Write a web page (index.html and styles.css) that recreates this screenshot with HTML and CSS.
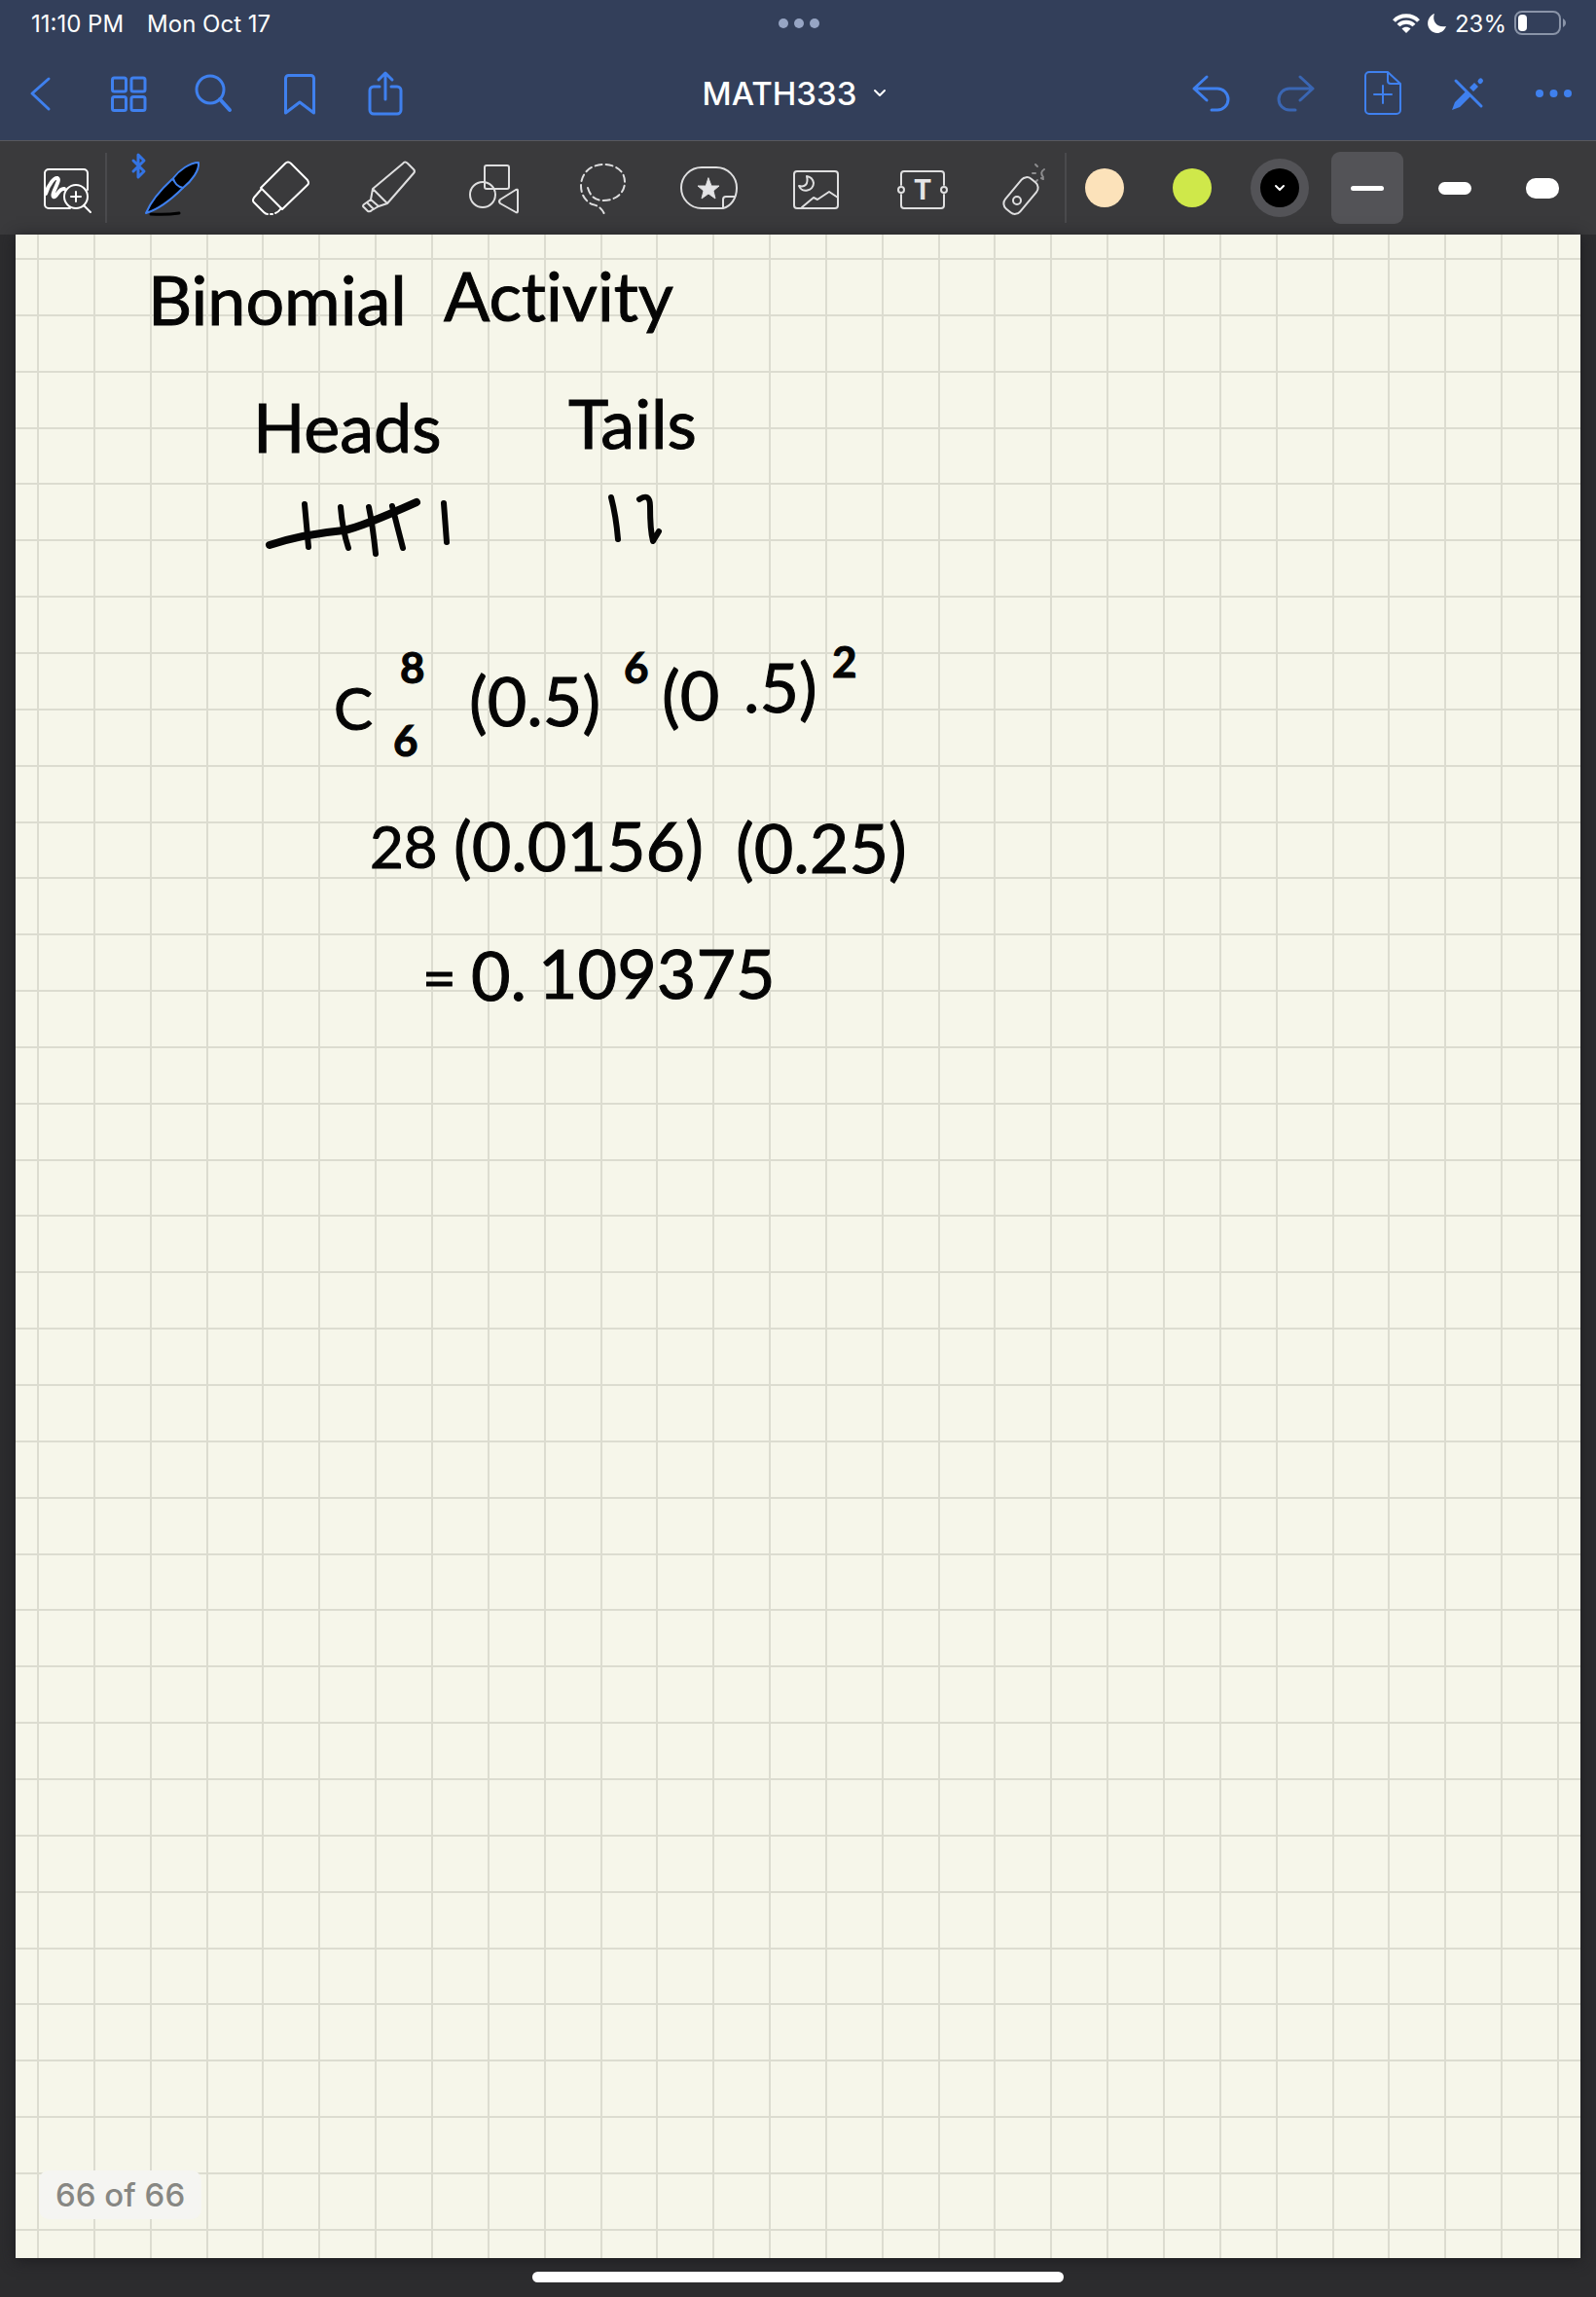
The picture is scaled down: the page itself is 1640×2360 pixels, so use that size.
FILE: index.html
```html
<!DOCTYPE html>
<html lang="en">
<head>
<meta charset="utf-8">
<meta name="viewport" content="width=device-width, initial-scale=1">
<title>MATH333</title>
<link rel="stylesheet" href="styles.css">
</head>
<body>
<header class="header">
  <div class="status">
    <div class="status-left"><span>11:10 PM</span><span>Mon Oct 17</span></div>
    <div class="multitask"><i></i><i></i><i></i></div>
    <div class="status-right">
      <svg width="28" height="20" viewBox="0 0 28 20" fill="none" stroke="#fff" stroke-width="4"><path d="M1.500 7.500C8 .500 20 .500 26.500 7.500"/><path d="M6 12C10 7.500 18 7.500 22 12"/><path d="M14 20l-4.500-4.500c2.500-2.500 6.500-2.500 9 0z" fill="#fff" stroke="none"/></svg>
      <svg width="20" height="20" viewBox="0 0 20 20"><path d="M7 0C4 8 10 15 19 13C17 18 13 20 10 20C-2 19-3 4 7 0z" fill="#fff"/></svg>
      <span>23%</span>
      <svg width="54" height="26" viewBox="0 0 54 26"><rect x="1" y="1" width="46" height="23" rx="7" fill="none" stroke="#8a94a8" stroke-width="2"/><rect x="4" y="4" width="9" height="17" rx="4" fill="#fff"/><path d="M50 8c4 2 4 7 0 9z" fill="#8a94a8"/></svg>
    </div>
  </div>
  <nav class="nav">
    <div class="nav-group">
      <button class="nav-btn" aria-label="Back"><svg class="nav-icon" viewBox="0 0 48 48"><path d="M30 9L13 24L30 40"/></svg></button>
      <button class="nav-btn" aria-label="Thumbnails"><svg class="nav-icon" viewBox="0 0 48 48"><rect x="7.500" y="8" width="14" height="14" rx="2"/><rect x="27" y="8" width="14" height="14" rx="2"/><rect x="7.500" y="27.500" width="14" height="14" rx="2"/><rect x="27" y="27.500" width="14" height="14" rx="2"/></svg></button>
      <button class="nav-btn" aria-label="Search"><svg class="nav-icon" viewBox="0 0 48 48"><circle cx="20" cy="20" r="14"/><path d="M30 30L40 41" stroke-width="4"/></svg></button>
      <button class="nav-btn" aria-label="Bookmark"><svg class="nav-icon" viewBox="0 0 48 48"><path d="M9.500 44V8.500a3 3 0 0 1 3-3h23a3 3 0 0 1 3 3V44L24 33z"/></svg></button>
      <button class="nav-btn" aria-label="Share"><svg class="nav-icon" viewBox="0 0 48 48"><path d="M18 17h-6a4 4 0 0 0-4 4v20a4 4 0 0 0 4 4h24a4 4 0 0 0 4-4V21a4 4 0 0 0-4-4h-6M24 30V4M17 10l7-7l7 7"/></svg></button>
    </div>
    <button class="title">MATH333<svg width="16" height="12" viewBox="0 0 16 12" fill="none" stroke="#fff" stroke-width="2" stroke-linecap="round" stroke-linejoin="round"><path d="M3 3l5 5l5-5"/></svg></button>
    <div class="nav-group nav-end">
      <button class="nav-btn" aria-label="Undo"><svg class="nav-icon" viewBox="0 0 48 48"><path d="M20 7L7 19L20 31M7 19H31a11 11 0 0 1 0 22H25"/></svg></button>
      <button class="nav-btn" aria-label="Redo" disabled><svg class="nav-icon" viewBox="0 0 48 48"><path d="M28 7L41 19L28 31M41 19H17a11 11 0 0 0 0 22H23"/></svg></button>
      <button class="nav-btn" aria-label="Add page"><svg class="nav-icon thin" viewBox="0 0 48 48"><path d="M30 2H11a4 4 0 0 0-4 4v35a4 4 0 0 0 4 4h28a4 4 0 0 0 4-4V14zV11a3 3 0 0 0 3 3h10M25 16v18M16 25h18"/></svg></button>
      <button class="nav-btn" aria-label="Read only mode"><svg class="nav-icon" viewBox="0 0 48 48"><path d="M12 11L38 37"/><path d="M8 41l3-8L22 22l5 5L16 38zM26 18l5-5l4 4l-5 5z" fill="#3f80ee" stroke="none"/><path d="M37 11.500l.500-.500" stroke-width="5"/></svg></button>
      <button class="nav-btn" aria-label="More"><svg class="nav-icon" viewBox="0 0 48 48"><g fill="#3f80ee" stroke="none"><circle cx="10" cy="24" r="4"/><circle cx="24.500" cy="24" r="4"/><circle cx="39" cy="24" r="4"/></g></svg></button>
    </div>
  </nav>
</header>

<div class="toolbar">
  <button class="tool zoom-tool" aria-label="Zoom window"><svg class="tool-icon bright" viewBox="0 0 64 64"><path d="M53 34V17a4 4 0 0 0-4-4H13a4 4 0 0 0-4 4v32a4 4 0 0 0 4 4h22"/><path d="M10 38C13 28 19 21 22 22C26 24 15 38 18 41C21 43 23 32 29 33" stroke-width="4"/><circle cx="41" cy="41" r="12"/><path d="M41 36v10M36 41h10M49 50l7 7"/></svg></button>
  <span class="divider"></span>
  <div class="tools">
    <button class="tool" aria-label="Pen"><svg class="tool-icon" viewBox="0 0 64 64"><path d="M10 59Q26 60 39 58" stroke="#000" stroke-width="3"/><g stroke="#3f80ee" stroke-width="2" fill="#000"><path d="M5 58C10 46 20 34 32 23L43 32C33 42 18 54 5 58Z"/><path d="M33 22C39 14 50 6 59 6C60 14 52 25 43 32C38 31 34 27 33 22z"/></g><path d="M-8 4L3 15L-3 21V-2L3 4L-8 15" stroke="#3474e4" stroke-width="3"/></svg></button>
    <button class="tool" aria-label="Eraser"><svg class="tool-icon bright" viewBox="0 0 64 64"><path d="M38 7q3-3 6 0L61 24q2 3 0 5L35 54L13 32z"/><path d="M13 34L6 42q-2 3 0 5L16 57q2 2 4 2M23 59h2M28 58q3-1 6-5"/></svg></button>
    <button class="tool" aria-label="Highlighter"><svg class="tool-icon" viewBox="0 0 64 64"><path d="M49 7q2-3 5 0l6 6q2 2 0 4L33 48L18 33zM18 33l-2 11l8 7l9-3M16 44l-7 5q-2 2 0 3l4 4q2 1 4-1l7-4M12 47l7 7"/></svg></button>
    <button class="tool" aria-label="Shapes"><svg class="tool-icon" viewBox="0 0 64 64"><rect x="23" y="9" width="25" height="24" rx="2"/><circle cx="21" cy="39" r="13"/><path d="M39 44q-2 2 0 4l16 9q2 1 2-1V35q0-2-2-1z"/></svg></button>
    <button class="tool" aria-label="Lasso"><svg class="tool-icon" viewBox="0 0 64 64"><path d="M19 32C22 42 28 45 35 45C48 45 57 37 57 26C57 14 47 8 35 8C22 8 12 17 12 30C12 38 16 46 24 49Q33 51 36 59" stroke-dasharray="7 4"/></svg></button>
    <button class="tool" aria-label="Elements"><svg class="tool-icon" viewBox="0 0 64 64"><path d="M48 53H26a21 21 0 0 1 0-42h15a21 21 0 0 1 21 21C62 43 56 51 48 53V44q0-3 3-3h9"/><path d="M33 22l3 8h8l-6 5l2 8l-7-5l-7 5l2-8l-6-5h8z" fill="#e4e4e6" stroke-width="1"/></svg></button>
    <button class="tool" aria-label="Image"><svg class="tool-icon" viewBox="0 0 64 64"><rect x="11" y="15" width="45" height="38" rx="3"/><path d="M24 20C26 28 22 32 16 30C19 38 31 35 31 27Q30 21 24 20zM19 52L31 42l4 2l12-8l9 6"/></svg></button>
    <button class="tool" aria-label="Text"><svg class="tool-icon" viewBox="0 0 64 64"><path d="M11 29V18a3 3 0 0 1 3-3h38a3 3 0 0 1 3 3v11M11 39v11a3 3 0 0 0 3 3h38a3 3 0 0 0 3-3V39"/><circle cx="11" cy="34" r="3"/><circle cx="55" cy="34" r="3"/><text class="icon-letter" x="33" y="44" text-anchor="middle">T</text></svg></button>
    <button class="tool" aria-label="Laser pointer"><svg class="tool-icon" viewBox="0 0 64 64"><rect x="14" y="20" width="20" height="40" rx="7" transform="rotate(40 24 40)"/><circle cx="20" cy="45" r="4"/><path d="M39 26l2-2M36 17h3M39 8l2 2M45 22l2 1M48 13q-5 3-1 8" opacity=".5"/></svg></button>
  </div>
  <span class="divider"></span>
  <div class="swatches">
    <button class="swatch" aria-label="Peach"><span class="dot peach"></span></button>
    <button class="swatch" aria-label="Lime"><span class="dot lime"></span></button>
    <button class="swatch" aria-label="Black, selected"><span class="dot black"><svg width="12" height="10" viewBox="0 0 12 10" fill="none" stroke="#fff" stroke-width="2" stroke-linecap="round" stroke-linejoin="round"><path d="M2 3l4 4l4-4"/></svg></span></button>
    <button class="swatch selected" aria-label="Thin stroke"><span class="width thin-w"></span></button>
    <button class="swatch" aria-label="Medium stroke"><span class="width mid-w"></span></button>
    <button class="swatch" aria-label="Thick stroke"><span class="width thick-w"></span></button>
  </div>
</div>

<main class="desk">
  <section class="page">
    <svg class="layer" width="100%" height="100%">
      <defs>
        <!-- one tile holds twenty squares of graph paper -->
        <pattern id="grid" x="22" y="24" width="1157" height="1157" patternUnits="userSpaceOnUse">
          <path id="rows" fill="none" stroke="#dcdcd0" stroke-width="2" d="M0 1h1157M0 59h1157M0 117h1157M0 175h1157M0 232h1157M0 290h1157M0 348h1157M0 406h1157M0 464h1157M0 522h1157M0 580h1157M0 637h1157M0 695h1157M0 753h1157M0 811h1157M0 869h1157M0 927h1157M0 984h1157M0 1042h1157M0 1100h1157"/>
          <use href="#rows" transform="matrix(0 1 1 0 0 0)"/>
        </pattern>
      </defs>
      <rect width="100%" height="100%" fill="url(#grid)"/>
    </svg>
    <svg class="layer ink" width="100%" height="100%">
      <g transform="translate(-16 -241)">
        <text class="large" x="152" y="334">Binomial</text>
        <text class="large" x="456" y="330">Activity</text>
        <text class="large" x="260" y="465">Heads</text>
        <text class="large" x="584" y="461">Tails</text>
        <g class="tally">
          <path d="M313 518L317 562M350 521Q352 545 358 563M379 521Q383 540 386 569M403 520Q408 540 414 563"/>
          <path class="strike" d="M277 560Q310 549 353 545Q370 542 428 516"/>
          <path d="M456 517L459 557M628 511Q633 530 635 554M657 513Q668 506 668 520Q668 545 671 556L677 546"/>
        </g>
        <text class="medium" x="343" y="750">C</text>
        <text class="small" x="411" y="702">8</text>
        <text class="small" x="404" y="777">6</text>
        <text class="large" x="482" y="746">(0.5)</text>
        <text class="small" x="641" y="702">6</text>
        <text class="large" x="680" y="740">(0</text>
        <text class="large" x="764" y="732">.5)</text>
        <text class="small" x="855" y="696">2</text>
        <text class="medium" x="380" y="892">28</text>
        <text class="large" x="466" y="895">(0.0156)</text>
        <text class="large" x="756" y="897">(0.25)</text>
        <text class="medium" x="434" y="1026">=</text>
        <text class="large" x="484" y="1028">0.</text>
        <text class="large" x="553" y="1026">109375</text>
      </g>
    </svg>
    <div class="counter">66 of 66</div>
  </section>
</main>
<footer class="home"><span></span></footer>
</body>
</html>
```
FILE: styles.css
```css
* { box-sizing: border-box; }
body {
  margin: 0;
  min-height: 100vh;
  display: flex;
  flex-direction: column;
  background: #2c2c2e;
  color: #fff;
  font-family: Inter, "Liberation Sans", sans-serif;
}
button {
  margin: 0;
  padding: 0;
  border: 0;
  background: none;
  color: inherit;
  font: inherit;
  display: flex;
  align-items: center;
  justify-content: center;
}
svg { display: block; overflow: visible; }

.header { background: #333f5a; border-bottom: 1px solid #58595e; }
.status {
  display: grid;
  grid-template-columns: 1fr auto 1fr;
  align-items: center;
  height: 48px;
  padding: 0 30px 0 32px;
  font-size: 24px;
}
.status-left { display: flex; gap: 24px; }
.multitask { display: flex; gap: 6px; }
.multitask i { width: 10px; height: 10px; border-radius: 50%; background: #97a5c4; }
.status-right { display: flex; align-items: center; justify-content: flex-end; gap: 8px; }

.nav {
  display: grid;
  grid-template-columns: 1fr auto 1fr;
  align-items: center;
  height: 96px;
}
.nav-group { display: flex; }
.nav-end { justify-content: flex-end; }
.nav-btn { width: 88px; height: 96px; }
.nav-btn:disabled { opacity: .6; }
.nav-icon {
  width: 48px;
  height: 48px;
  fill: none;
  stroke: #3f80ee;
  stroke-width: 3;
  stroke-linecap: round;
  stroke-linejoin: round;
}
.thin { stroke-width: 2; }
.title { gap: 16px; padding-right: 6px; font-size: 33px; font-weight: 500; }

.toolbar { display: flex; align-items: center; height: 96px; background: #3a3a3c; }
.tool { width: 74px; height: 74px; }
.zoom-tool { margin: 0 2px 0 32px; }
.divider { width: 2px; height: 72px; background: #4a4a4d; }
.tools { flex: 1; display: flex; justify-content: space-between; padding-left: 30px; }
.tool-icon {
  width: 64px;
  height: 64px;
  fill: none;
  stroke: #dededf;
  stroke-width: 2;
  stroke-linecap: round;
  stroke-linejoin: round;
}
.bright { stroke: #fff; }
.icon-letter { fill: #e4e4e6; stroke: none; font-size: 28px; font-weight: 700; }
.swatches { display: flex; gap: 16px; padding: 0 18px 0 2px; }
.swatch { width: 74px; height: 74px; border-radius: 9px; }
.selected { background: #535357; }
.dot { width: 40px; height: 40px; border-radius: 50%; display: grid; place-items: center; }
.peach { background: #fce2ba; }
.lime { background: #cfe84a; }
.black { background: #000; box-shadow: 0 0 0 10px #535357; }
.width { width: 34px; background: #fff; border-radius: 10px; }
.thin-w { height: 5px; }
.mid-w { height: 13px; }
.thick-w { height: 21px; }

.desk { flex: 1; display: flex; padding: 0 16px; }
.page {
  position: relative;
  flex: 1;
  min-height: 900px;
  background: #f6f6ea;
  box-shadow: 0 2px 14px #1c1c20;
}
.layer { position: absolute; inset: 0; }
.page > .layer { overflow: hidden; }
.ink {
  fill: #050505;
  stroke: #050505;
  font-family: Lato, "Open Sans", sans-serif;
  font-variant-ligatures: none;
}
.large { font-size: 70px; }
.medium { font-size: 60px; }
.small { font-size: 44px; font-weight: 700; }
.tally { fill: none; stroke-width: 6; stroke-linecap: round; stroke-linejoin: round; }
.strike { stroke-width: 8; }
.counter {
  position: absolute;
  left: 24px;
  bottom: 40px;
  padding: 0 17px;
  border-radius: 10px;
  background: #f5f5f2;
  color: #878783;
  font-size: 33px;
  line-height: 50px;
  font-weight: 500;
}
.home { position: relative; height: 40px; display: flex; justify-content: center; padding-top: 14px; }
.home span { width: 33.333%; height: 11px; border-radius: 6px; background: #fff; }
```
